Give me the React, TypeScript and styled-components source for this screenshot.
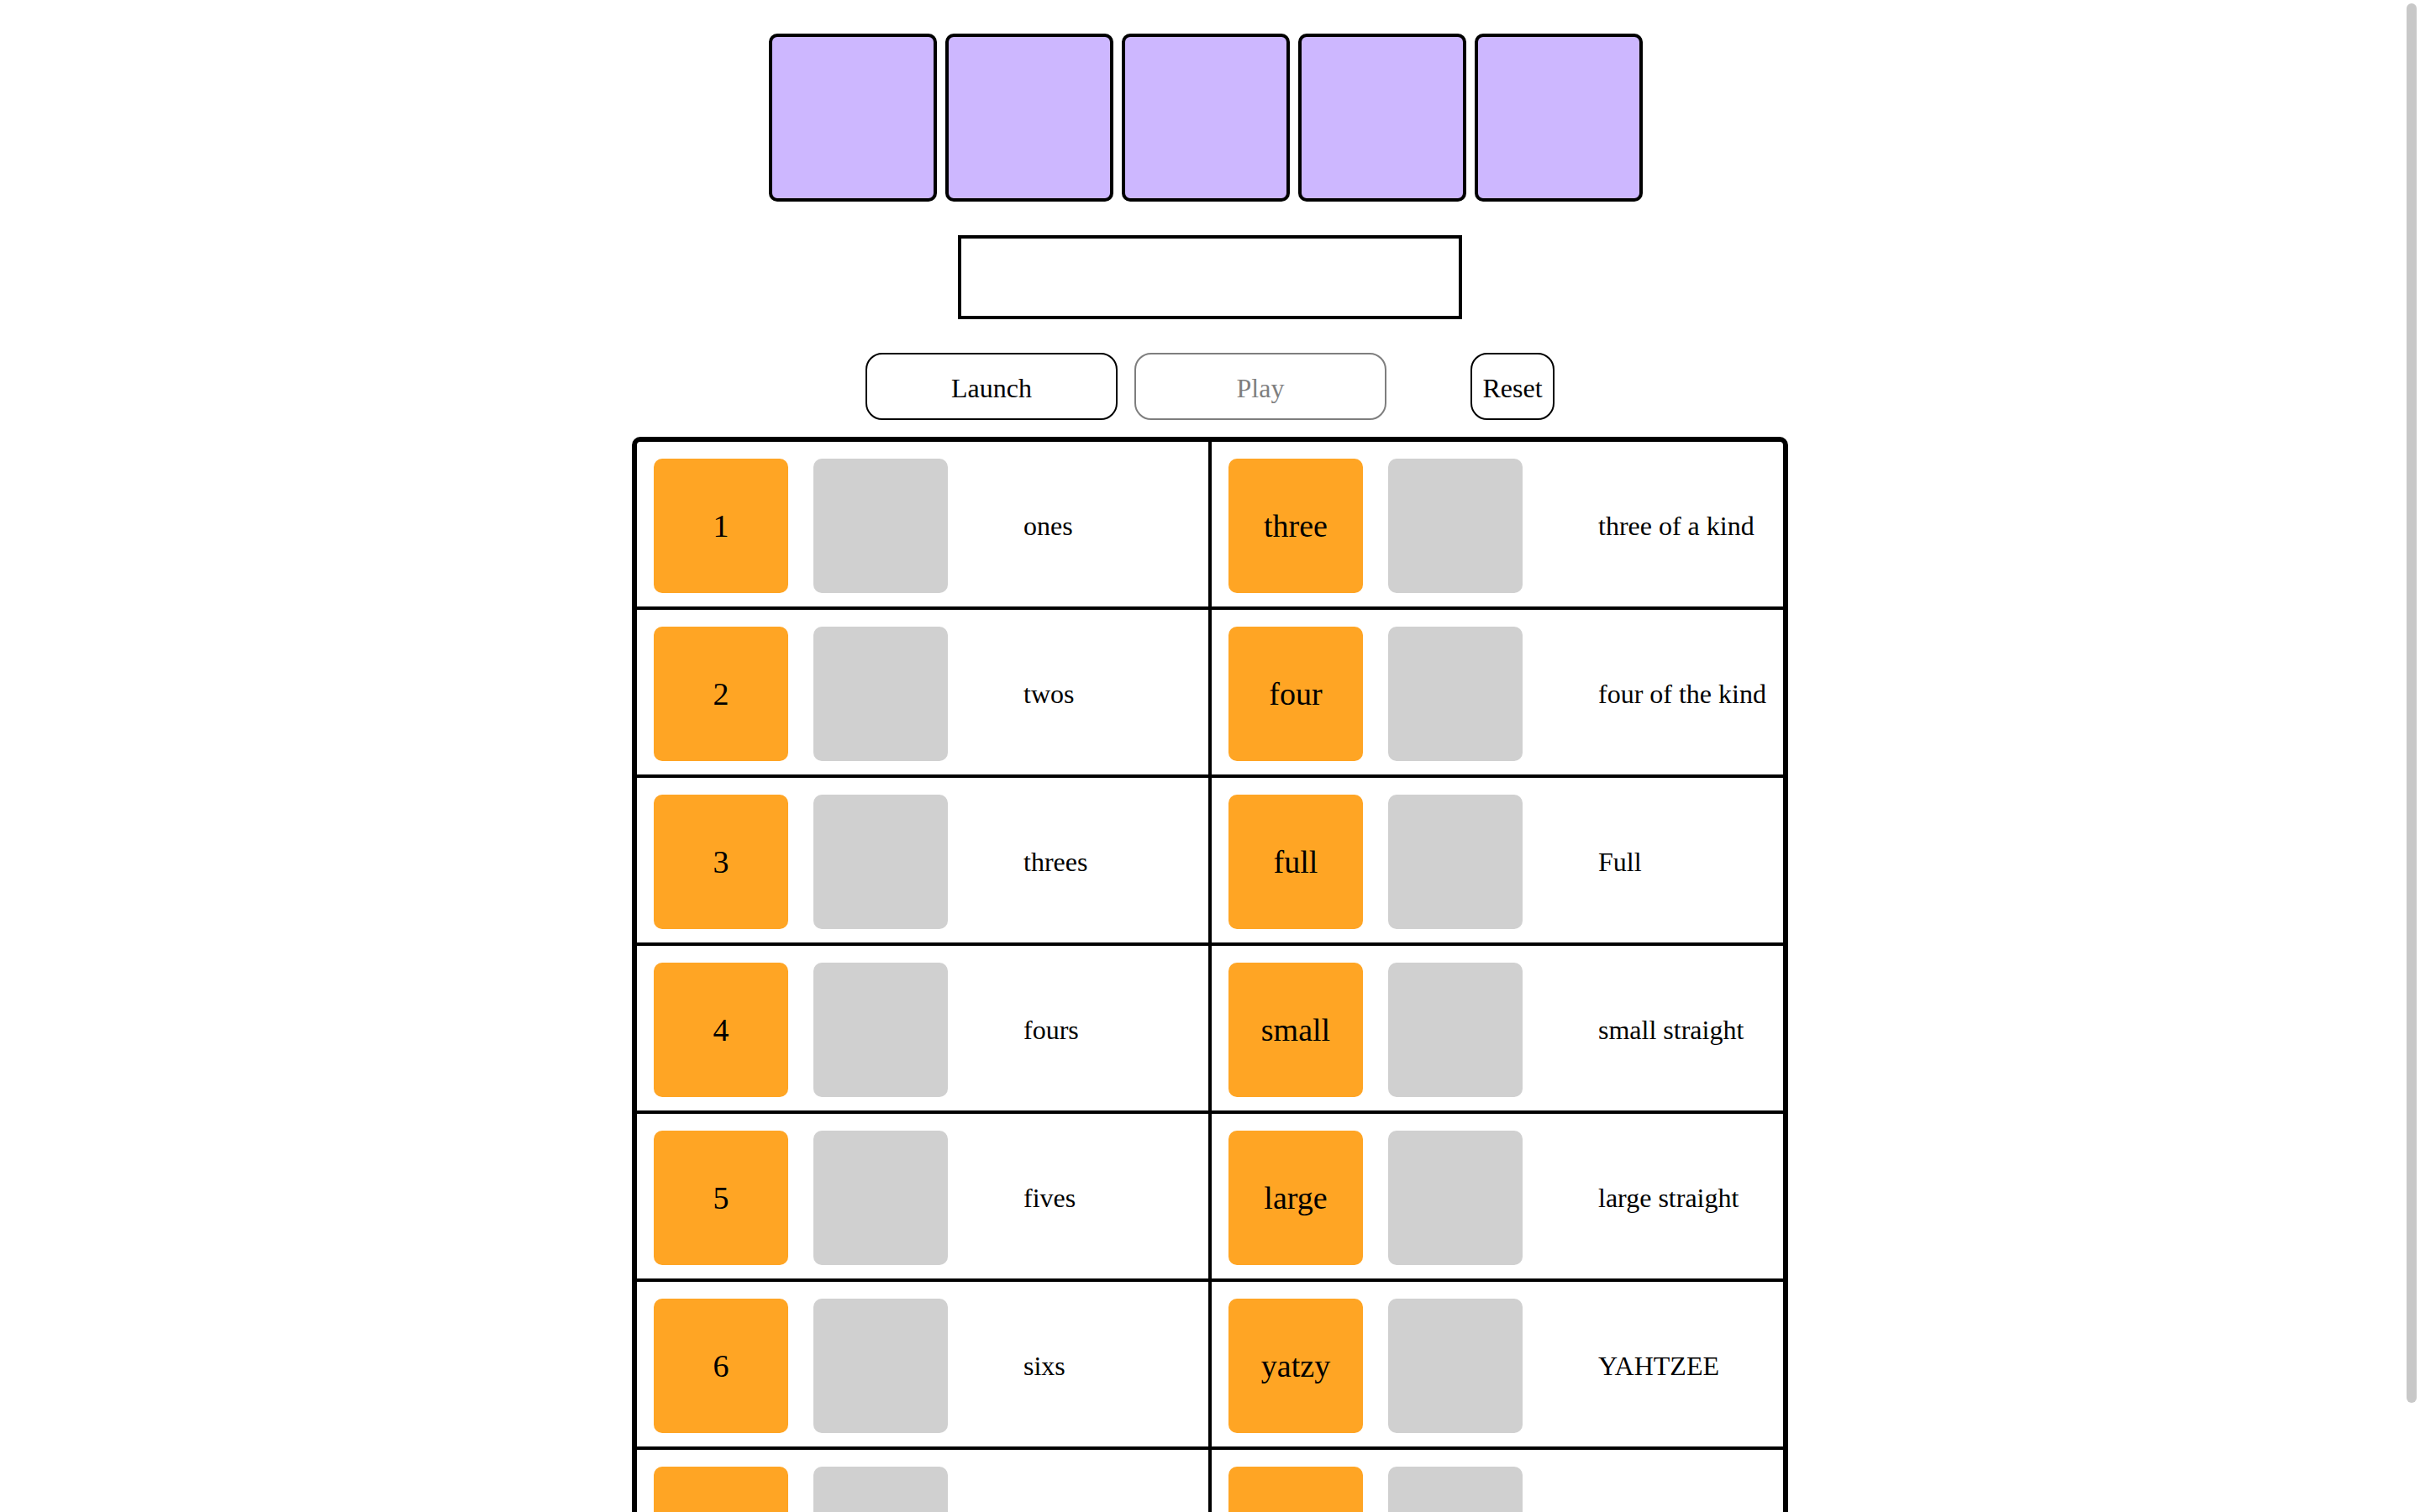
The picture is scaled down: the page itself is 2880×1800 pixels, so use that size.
import React, { useEffect, useRef, useState } from "react";
import styled, { createGlobalStyle } from "styled-components";

const GlobalStyle = createGlobalStyle`
  *, *::before, *::after { box-sizing: border-box; }
  body {
    margin: 0;
    background: #fff;
    color: #000;
    font-family: "Liberation Serif", "Times New Roman", serif;
    font-size: 32px;
    line-height: 36px;
  }
  button { font: inherit; color: inherit; }
`;

const Scroller = styled.div`
  height: 100vh;
  overflow-y: auto;
  scrollbar-width: none;
`;

const Game = styled.main`
  display: flex;
  flex-direction: column;
  align-items: center;
  padding: 40px 20px 4px;
`;

const DiceRow = styled.section`
  display: flex;
  flex-wrap: wrap;
  justify-content: center;
`;

const Die = styled.div`
  width: 200px;
  height: 200px;
  margin-right: 10px;
  border: 4px solid #000;
  border-radius: 10px;
  background: #cdb7ff;
`;

const Message = styled.output`
  display: block;
  width: 100%;
  max-width: 600px;
  height: 100px;
  margin: 40px 0;
  border: 4px solid #000;
`;

const Controls = styled.div`
  display: flex;
  justify-content: center;
  gap: 20px;
  margin-bottom: 20px;
`;

const ControlButton = styled.button<{ $wide?: boolean }>`
  width: ${({ $wide }) => ($wide ? "300px" : "100px")};
  height: 80px;
  padding: 4px 0 0;
  border: 2px solid #000;
  border-radius: 20px;
  background: #fff;

  &:disabled { opacity: 0.5; }
`;

const ResetButton = styled(ControlButton)`
  margin-left: 80px;
`;

const ScoreTable = styled.table`
  width: 100%;
  max-width: 1376px;
  table-layout: fixed;
  border: 6px solid #000;
  border-radius: 10px;
  border-spacing: 0;
`;

const ScoreCell = styled.td`
  padding: 0;
  border-bottom: 4px solid #000;

  tr:last-child > & { border-bottom-color: transparent; }
`;

const Divider = styled.td`
  width: 4px;
  padding: 0;
  background: #000;
`;

const Entry = styled.div`
  display: flex;
  align-items: center;
  height: 196px;
  padding: 4px 0 0 20px;
`;

const Category = styled.button`
  flex: none;
  width: 160px;
  height: 160px;
  margin-right: 30px;
  padding: 0;
  border: 0;
  border-radius: 10px;
  background: #ffa524;
  font-size: 38px;
  line-height: 44px;
`;

const Points = styled.div`
  flex: none;
  width: 160px;
  height: 160px;
  margin-right: 90px;
  border-radius: 10px;
  background: #d0d0d0;
`;

const Label = styled.span`
  white-space: nowrap;
`;

const ScrollThumb = styled.div`
  position: fixed;
  top: 4px;
  right: 4px;
  width: 12px;
  border-radius: 6px;
  background: #c8c8c8;
  pointer-events: none;
`;

type Score = { short: string; label: string };

const rows: [Score, Score][] = [
  [{ short: "1", label: "ones" }, { short: "three", label: "three of a kind" }],
  [{ short: "2", label: "twos" }, { short: "four", label: "four of the kind" }],
  [{ short: "3", label: "threes" }, { short: "full", label: "Full" }],
  [{ short: "4", label: "fours" }, { short: "small", label: "small straight" }],
  [{ short: "5", label: "fives" }, { short: "large", label: "large straight" }],
  [{ short: "6", label: "sixs" }, { short: "yatzy", label: "YAHTZEE" }],
  [{ short: "", label: "" }, { short: "", label: "" }],
];

function ScoreEntry({ score }: { score: Score }) {
  return (
    <ScoreCell>
      <Entry>
        <Category type="button">{score.short}</Category>
        <Points />
        <Label>{score.label}</Label>
      </Entry>
    </ScoreCell>
  );
}

export default function App() {
  const scroller = useRef<HTMLDivElement>(null);
  const [thumb, setThumb] = useState({ height: 0, offset: 0 });

  const updateThumb = () => {
    const el = scroller.current;
    if (!el) return;
    const track = el.clientHeight - 8;
    const visible = el.scrollHeight > el.clientHeight;
    setThumb({
      height: visible ? Math.round((track * el.clientHeight) / el.scrollHeight) : 0,
      offset: Math.round((track * el.scrollTop) / el.scrollHeight),
    });
  };

  useEffect(() => {
    updateThumb();
    window.addEventListener("resize", updateThumb);
    return () => window.removeEventListener("resize", updateThumb);
  }, []);

  return (
    <>
      <GlobalStyle />
      <Scroller ref={scroller} onScroll={updateThumb}>
        <Game>
          <DiceRow>
            {[0, 1, 2, 3, 4].map((n) => (
              <Die key={n} />
            ))}
          </DiceRow>
          <Message />
          <Controls>
            <ControlButton type="button" $wide>Launch</ControlButton>
            <ControlButton type="button" $wide disabled>Play</ControlButton>
            <ResetButton type="button">Reset</ResetButton>
          </Controls>
          <ScoreTable>
            <colgroup>
              <col />
              <col width={4} />
              <col />
            </colgroup>
            <tbody>
              {rows.map(([left, right], i) => (
                <tr key={i}>
                  <ScoreEntry score={left} />
                  <Divider />
                  <ScoreEntry score={right} />
                </tr>
              ))}
            </tbody>
          </ScoreTable>
        </Game>
      </Scroller>
      <ScrollThumb style={{ height: thumb.height, transform: `translateY(${thumb.offset}px)` }} />
    </>
  );
}
